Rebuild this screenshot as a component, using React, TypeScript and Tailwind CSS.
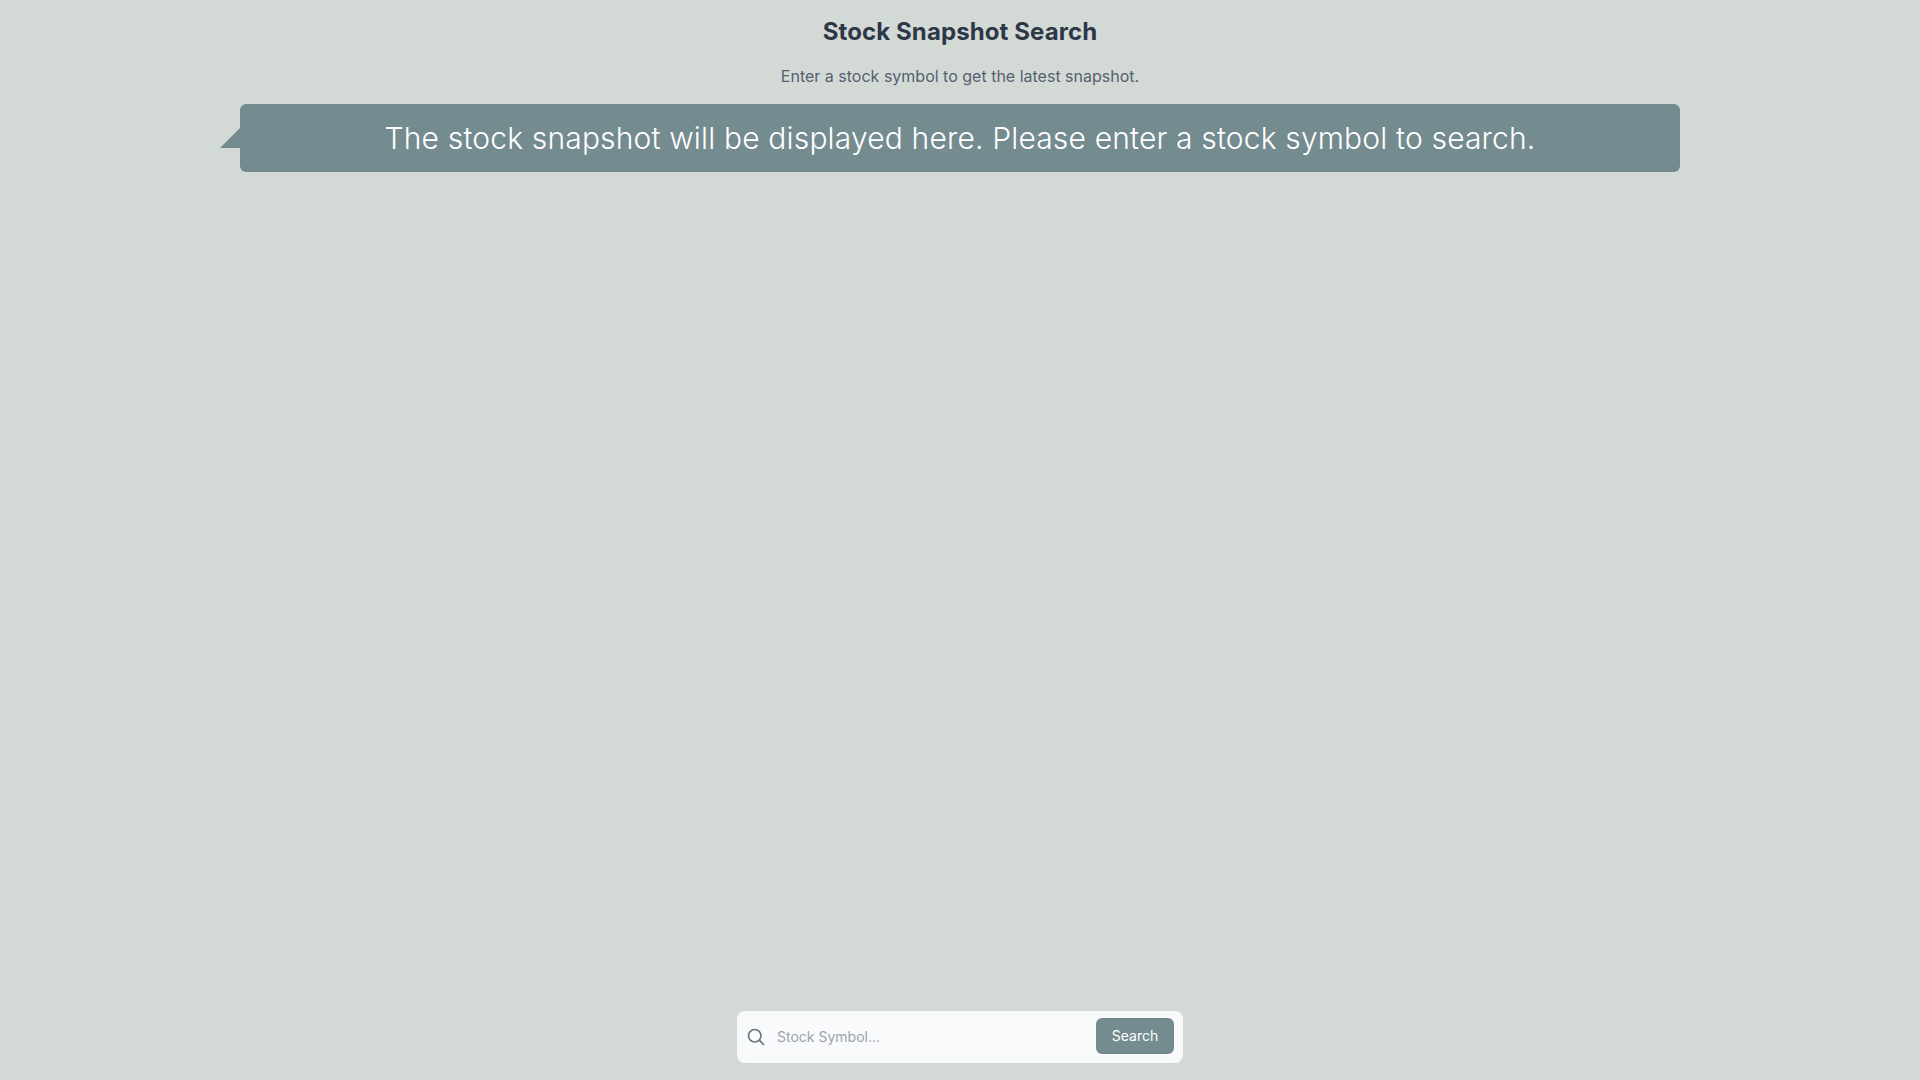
import React from "react";

export default function App() {
  return (
    <div className="h-screen w-full bg-[#d3dad6] flex flex-col items-center font-['Inter',sans-serif]">
      <h1 className="mt-4 text-2xl font-bold text-[#2d3748] text-center tracking-[0.1px]">Stock Snapshot Search</h1>
      <p className="mt-4 text-base text-[#566070] text-center">Enter a stock symbol to get the latest snapshot.</p>
      <div className="relative mt-4 w-[1440px] rounded-md bg-[#748b8f] py-4 text-center">
        <div className="absolute left-[-20px] top-6 w-0 h-0 border-l-[20px] border-l-transparent border-b-[20px] border-b-[#748b8f]" />
        <p className="text-3xl font-light text-white tracking-[0.165px]">The stock snapshot will be displayed here. Please enter a stock symbol to search.</p>
      </div>
      <div className="flex-1" />
      <div className="mb-[17px] flex h-[52px] w-[446px] items-center rounded-lg bg-[#f8fafc] pl-[9px] pr-[9px]">
        <svg viewBox="0 0 24 24" fill="none" stroke="#6b7280" strokeWidth={2} strokeLinecap="round" strokeLinejoin="round" className="h-5 w-5 shrink-0">
          <path d="m21 21-5.197-5.197m0 0A7.5 7.5 0 1 0 5.196 5.196a7.5 7.5 0 0 0 10.607 10.607Z" />
        </svg>
        <input
          className="ml-[11px] flex-1 min-w-0 bg-transparent text-sm text-[#374151] outline-none placeholder:text-[#9ca3af]"
          placeholder="Stock Symbol..."
          readOnly
        />
        <button className="mb-[2px] h-9 w-[78px] rounded-md bg-[#748b8f] text-sm font-normal text-white">Search</button>
      </div>
    </div>
  );
}
